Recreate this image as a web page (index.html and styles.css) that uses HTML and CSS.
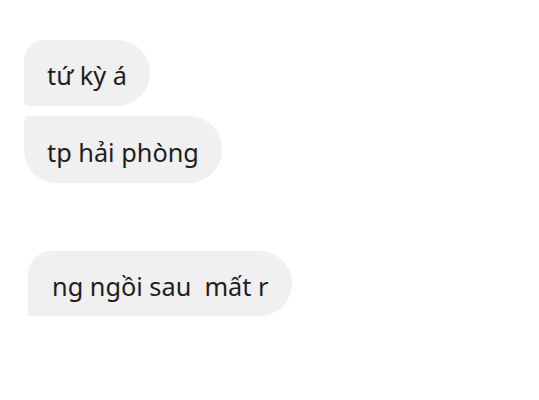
FILE: index.html
```html
<!DOCTYPE html>
<html lang="vi">
<head>
    <meta charset="UTF-8">
    <meta name="viewport" content="width=device-width, initial-scale=1.0">
    <title>Tin nhắn</title>
    <link rel="stylesheet" href="styles.css">
</head>
<body>
    <div class="chat">
        <div class="group">
            <div class="bubble first">tứ kỳ á</div>
            <div class="bubble last">tp hải phòng</div>
        </div>
        <div class="group later">
            <div class="bubble cut">ng ngồi sau&nbsp; mất r</div>
        </div>
    </div>
</body>
</html>
```

FILE: styles.css
```css
/* Reset */
* {
    margin: 0;
    padding: 0;
    box-sizing: border-box;
}

body, html {
    height: 100%;
    font-family: 'Noto Sans', 'Open Sans', sans-serif;
}

body {
    background-color: #fff;
    overflow: hidden;
}

/* Chat column */
.chat {
    display: flex;
    flex-direction: column;
    padding: 40px 0 0 24px;
    height: 100%;
}

.group {
    display: flex;
    flex-direction: column;
    align-items: flex-start;
    gap: 10px;
}

.group.later {
    margin-top: 68px;
    margin-left: 4px;
}

/* Message bubbles */
.bubble {
    display: flex;
    align-items: center;
    height: 66px;
    padding: 3px 23px 0;
    background-color: #f0f0f0;
    color: #1e1e1e;
    font-size: 25.3px;
    border-radius: 33px;
}

.bubble.first {
    border-radius: 20px 33px 33px 5px;
}

.bubble.last {
    height: 67px;
    padding-top: 4px;
    border-radius: 5px 33px 33px 33px;
}

.bubble.cut {
    height: 65px;
    padding: 5px 24px 0;
    border-radius: 24px 33px 33px 0;
}
```
